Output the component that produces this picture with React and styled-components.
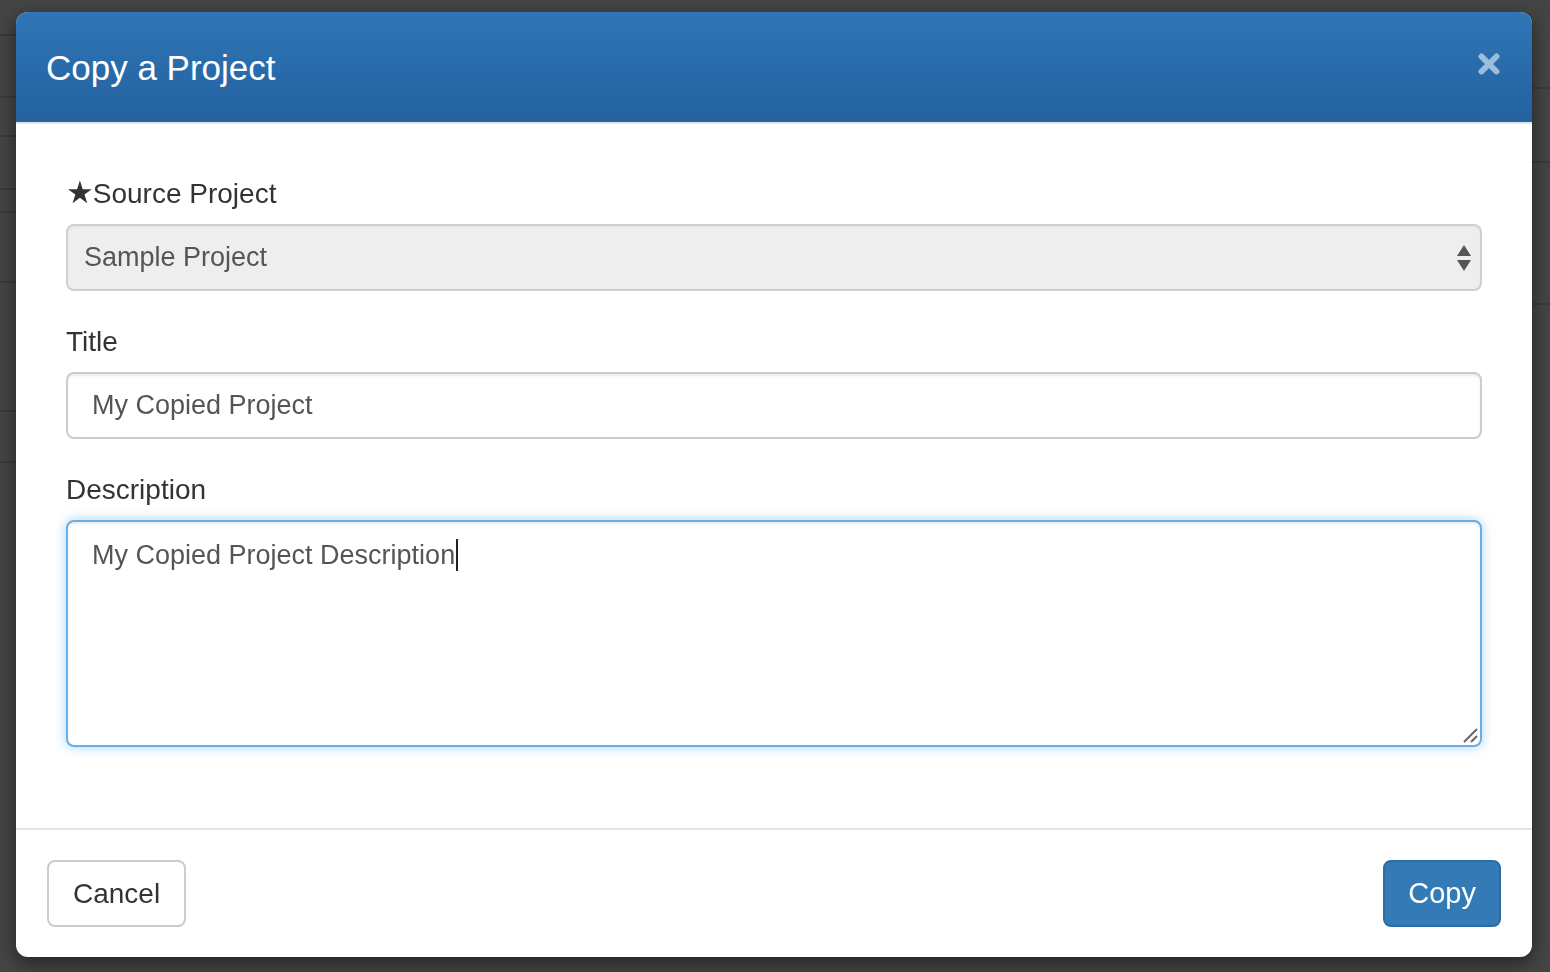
import styled, { createGlobalStyle } from "styled-components";

const GlobalStyle = createGlobalStyle`
  html, body {
    margin: 0;
    padding: 0;
    height: 100%;
    background: #454545;
    font-family: "Liberation Sans", Arial, Helvetica, sans-serif;
  }
  #root {
    height: 100%;
  }
`;

const leftLines = [36, 62, 39, 53, 23, 70, 129, 51];
const rightLines = [89, 74, 142];

const App = () => {
  return (
    <>
      <GlobalStyle />
      <Page>
        <PageColumn>
          {leftLines.map((h, i) => (
            <PageRow key={i} style={{ height: h }} />
          ))}
        </PageColumn>
        <PageColumn>
          {rightLines.map((h, i) => (
            <PageRow key={i} style={{ height: h }} />
          ))}
        </PageColumn>
      </Page>
      <Overlay>
        <Modal>
          <Header>
            <Title>Copy a Project</Title>
            <CloseBtn aria-label="Close">
              <svg width="22" height="22" viewBox="0 0 22 22">
                <path d="M3.5 3.5 L18.5 18.5 M18.5 3.5 L3.5 18.5" stroke="#9dbddc" strokeWidth="6" strokeLinecap="round" />
              </svg>
            </CloseBtn>
          </Header>
          <Body>
            <FormGroup>
              <Label>
                <Star>★</Star>Source Project
              </Label>
              <Select>
                <span>Sample Project</span>
                <svg width="16" height="28" viewBox="0 0 16 28">
                  <path d="M8 1 L15 12 L1 12 Z" fill="#555" />
                  <path d="M1 16 L15 16 L8 27 Z" fill="#555" />
                </svg>
              </Select>
            </FormGroup>
            <FormGroup>
              <Label>Title</Label>
              <Input>My Copied Project</Input>
            </FormGroup>
            <FormGroup>
              <Label>Description</Label>
              <TextArea>
                My Copied Project Description
                <Caret />
                <Grip width="18" height="18" viewBox="0 0 18 18">
                  <path d="M16 3 L3 16 M16 10 L10 16" stroke="#666" strokeWidth="2" />
                </Grip>
              </TextArea>
            </FormGroup>
          </Body>
          <Footer>
            <Button>Cancel</Button>
            <Button $primary>Copy</Button>
          </Footer>
        </Modal>
      </Overlay>
    </>
  );
};

export default App;

const Page = styled.div`
  height: 972px;
  display: flex;
  justify-content: space-between;
  overflow: hidden;
`;

const PageColumn = styled.div`
  width: 40px;
  display: flex;
  flex-direction: column;
`;

const PageRow = styled.div`
  border-bottom: 2px solid #3a3a3a;
  box-sizing: border-box;
`;

const Overlay = styled.div`
  position: fixed;
  inset: 0;
  padding: 12px 18px 0 16px;
`;

const Modal = styled.div`
  width: 1516px;
  background: #fff;
  border-radius: 12px;
  overflow: hidden;
  box-shadow: 0 6px 20px rgba(0, 0, 0, 0.5);
`;

const Header = styled.div`
  height: 110px;
  display: flex;
  align-items: center;
  justify-content: space-between;
  padding: 0 32px 0 30px;
  background: linear-gradient(to bottom, #2f76b6, #2361a0);
  border-bottom: 2px solid #e5e5e5;
`;

const Title = styled.h4`
  margin: 0;
  padding-top: 2px;
  font-size: 35px;
  font-weight: normal;
  color: #fff;
`;

const CloseBtn = styled.button`
  display: flex;
  border: none;
  background: none;
  padding: 0;
  margin-bottom: 6px;
  cursor: pointer;
`;

const Body = styled.div`
  padding: 50px 50px 50px;
`;

const FormGroup = styled.div`
  margin-bottom: 31px;
`;

const Label = styled.div`
  display: flex;
  align-items: center;
  height: 40px;
  margin-bottom: 10px;
  font-size: 28px;
  color: #333;
`;

const Star = styled.span`
  font-family: "DejaVu Sans", sans-serif;
  font-size: 31px;
  margin-top: -5px;
  margin-right: -1px;
`;

const Field = styled.div`
  box-sizing: border-box;
  width: 100%;
  border: 2px solid #ccc;
  border-radius: 8px;
  font-size: 27px;
  color: #555;
`;

const Select = styled(Field)`
  height: 67px;
  display: flex;
  align-items: center;
  justify-content: space-between;
  padding: 0 8px 0 16px;
  background: #eee;
  border-color: #d0d0d0;
  box-shadow: inset 0 1px 2px rgba(0, 0, 0, 0.05);
`;

const Input = styled(Field)`
  height: 67px;
  display: flex;
  align-items: center;
  padding: 0 24px;
  background: #fff;
  box-shadow: inset 0 2px 2px rgba(0, 0, 0, 0.075);
`;

const TextArea = styled(Field)`
  position: relative;
  height: 227px;
  padding: 13px 24px;
  line-height: 40px;
  background: #fff;
  border-color: #66afe9;
  box-shadow: inset 0 2px 2px rgba(0, 0, 0, 0.075), 0 0 12px rgba(102, 175, 233, 0.55);
`;

const Caret = styled.span`
  display: inline-block;
  width: 2px;
  height: 32px;
  margin-left: 1px;
  vertical-align: -7px;
  background: #222;
`;

const Grip = styled.svg`
  position: absolute;
  right: 1px;
  bottom: 1px;
`;

const Footer = styled.div`
  display: flex;
  justify-content: space-between;
  padding: 30px 31px 30px;
  border-top: 2px solid #e5e5e5;
`;

const Button = styled.button`
  height: 67px;
  padding: 0 ${(p) => (p.$primary ? "23px" : "24px")};
  border-radius: 8px;
  border: 2px solid ${(p) => (p.$primary ? "#2e6da4" : "#ccc")};
  background: ${(p) => (p.$primary ? "#337ab7" : "#fff")};
  color: ${(p) => (p.$primary ? "#fff" : "#333")};
  font-family: "Liberation Sans", Arial, sans-serif;
  font-size: ${(p) => (p.$primary ? "29px" : "28px")};
  cursor: pointer;
`;
